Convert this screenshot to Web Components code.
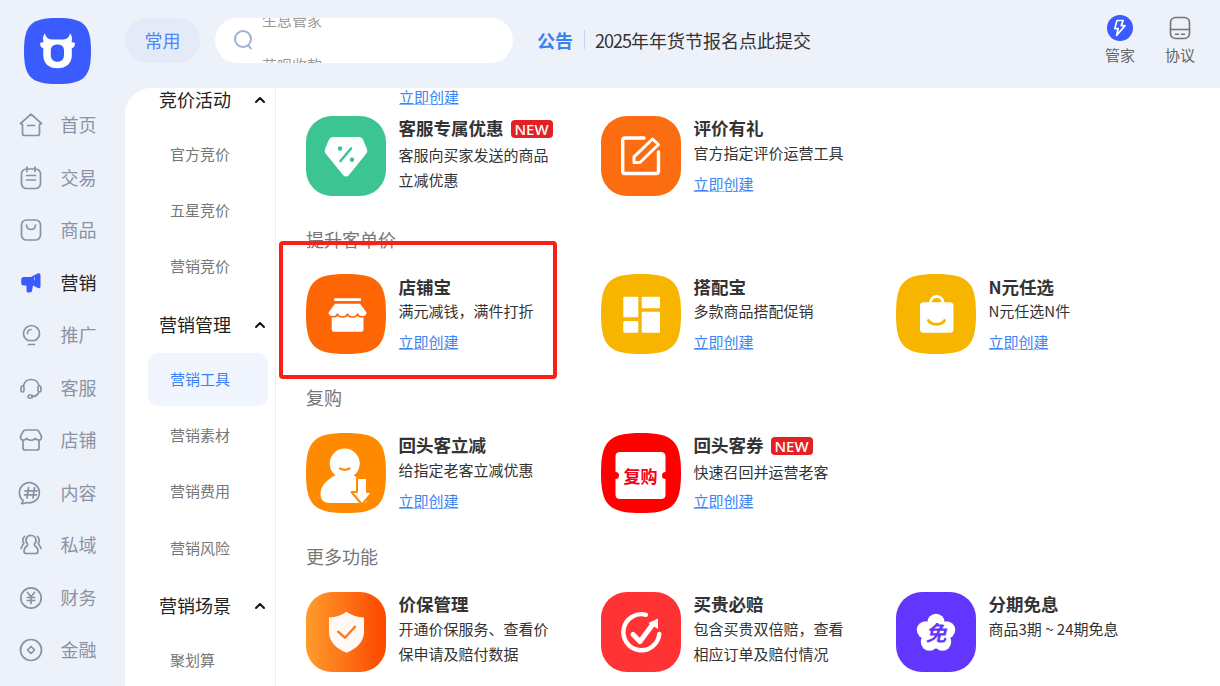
<!DOCTYPE html>
<html lang="zh-CN">
<head>
<meta charset="utf-8">
<title>营销工具</title>
<style>
html,body{margin:0;padding:0;height:686px;overflow:hidden;background:#edf1f9;}
body{font-family:"Noto Sans CJK SC","Liberation Sans",sans-serif;color:#333;}
svg{display:block;}
</style>
</head>
<body>
<app-page>
  <top-bar slot="top">
    <brand-logo></brand-logo>
    <pill-tab>常用</pill-tab>
    <search-ticker>
      <span>生息管家</span>
      <span>花呗收款</span>
    </search-ticker>
    <notice-line label="公告"><span style="letter-spacing:-1px">2025</span>年年货节报名点此提交</notice-line>
    <top-action slot="actions" label="管家">
      <svg width="26" height="26" viewBox="0 0 26 26"><circle cx="13" cy="13" r="13" fill="#3a5cff"/><path d="M14.5 5.5H10L7.8 13.6H11.2L9.6 20.5L18 10.6H14.2L16.2 5.5Z" fill="none" stroke="#fff" stroke-width="1.7" stroke-linejoin="round"/></svg>
    </top-action>
    <top-action slot="actions" label="协议">
      <svg width="26" height="26" viewBox="0 0 26 26" fill="none" stroke="#757575" stroke-width="1.6" stroke-linecap="round"><rect x="3.5" y="2.5" width="19" height="21" rx="5"/><path d="M3.5 14.5H22.5M8.5 19.3H11.5M14.5 19.3H17.5"/></svg>
    </top-action>
  </top-bar>

  <rail-nav slot="rail">
    <rail-item label="首页"><svg width="26" height="26" viewBox="0 0 26 26"><path d="M2.5 11.5L13 2.2L23.5 11.5L21.5 12.6V21.5Q21.5 23.5 19.5 23.5H6.500Q4.500 23.500 4.500 21.500V12.600ZM9.500 13.500H16.500"/></svg></rail-item>
    <rail-item label="交易"><svg width="26" height="26" viewBox="0 0 26 26"><rect x="3.500" y="4" width="19" height="19.500" rx="5"/><path d="M9 2V6.500M17 2V6.500M8.500 10.500H17.500M8.500 15H17.500"/></svg></rail-item>
    <rail-item label="商品"><svg width="26" height="26" viewBox="0 0 26 26"><rect x="3.500" y="3" width="19" height="20" rx="5"/><path d="M8.500 8C9 14 17 14 17.500 8"/></svg></rail-item>
    <rail-item label="营销" active><svg width="26" height="26" viewBox="0 0 26 26"><path style="fill:#3a5cff;stroke:none" d="M5.500 7H13L19.500 3.500Q22.500 2.500 22.500 5V16.500Q22.500 19 20 18L15 15.500L14 21Q13.500 22.500 11.500 22.500H10Q8.500 22.500 8.500 21V15.500H5.500Q3.200 15.500 3.200 13V9.500Q3.200 7 5.500 7Z"/><path style="stroke:#9fb0ff;stroke-width:1" d="M16.500 7.500V10"/></svg></rail-item>
    <rail-item label="推广"><svg width="26" height="26" viewBox="0 0 26 26"><path d="M10 18.500C7.500 17 5.500 14.500 5.500 11.500A8 8 0 0 1 21.500 11.500C21.500 14.500 19.500 17 17 18.500ZM10.500 22.500H16.500M9.500 11.500A4 4 0 0 1 13 7.500"/></svg></rail-item>
    <rail-item label="客服"><svg width="26" height="26" viewBox="0 0 26 26"><path d="M5.500 10.500A8 8 0 0 1 21 10.500M20.500 18C19 21 17 21.500 14 21.500"/><rect x="3" y="11" width="3" height="6" rx="1.500"/><rect x="20" y="11" width="3" height="6" rx="1.500"/><rect x="10" y="20" width="4.500" height="3" rx="1.500"/></svg></rail-item>
    <rail-item label="店铺"><svg width="26" height="26" viewBox="0 0 26 26"><path d="M7.500 3H18.500Q20 3 20.700 4.200L23.500 9.500Q23.500 13.500 20.500 13Q18.500 13 17.500 11.500Q13 15 8.500 11.500Q7.500 13 5.500 13Q2.500 13.500 2.500 9.500L5.300 4.200Q6 3 7.500 3ZM5 13V21Q5 23 7 23H19Q21 23 21 21V13"/></svg></rail-item>
    <rail-item label="内容"><svg width="26" height="26" viewBox="0 0 26 26"><path d="M5 20.500A10 10 0 1 1 9 22.500Q6.500 23.800 3.500 23.500Q5 22.500 5 20.500ZM10.500 7.500L9 18M16.500 7.500L15 18M7 10.800H19M6.500 14.800H18.500"/></svg></rail-item>
    <rail-item label="私域"><svg width="26" height="26" viewBox="0 0 26 26"><path d="M13.200 3.500A4.800 4.800 0 0 1 16.500 11.800Q16 13 17 14C19 15 20 17 20 19.500Q20 21.500 17.500 21.500H8.500Q6 21.500 6 19.500C6 17 7 15 9 14Q10 13 9.500 11.800A4.800 4.800 0 0 1 13.200 3.500ZM6.500 4.500Q3.500 7.500 5.800 11.500Q4 13.500 3 16.500M19.500 4.500Q22.500 7.500 20.200 11.500Q22 13.500 23 16.500"/></svg></rail-item>
    <rail-item label="财务"><svg width="26" height="26" viewBox="0 0 26 26"><circle cx="13" cy="13" r="10.200"/><path d="M9.500 7.500L13 11.800L16.500 7.500M13 11.800V18.500M9.300 12.500H16.700M9.300 15.500H16.700"/></svg></rail-item>
    <rail-item label="金融"><svg width="26" height="26" viewBox="0 0 26 26"><circle cx="13" cy="13" r="10.500"/><path d="M13 9.500L16.500 13L13 16.500L9.500 13Z"/></svg></rail-item>
  </rail-nav>

  <sub-nav slot="sub">
    <sub-head>竞价活动</sub-head>
    <sub-item>官方竞价</sub-item>
    <sub-item>五星竞价</sub-item>
    <sub-item>营销竞价</sub-item>
    <sub-head>营销管理</sub-head>
    <sub-item active>营销工具</sub-item>
    <sub-item>营销素材</sub-item>
    <sub-item>营销费用</sub-item>
    <sub-item>营销风险</sub-item>
    <sub-head>营销场景</sub-head>
    <sub-item>聚划算</sub-item>
  </sub-nav>

  <tool-board slot="main">
    <tool-peek><tool-link>立即创建</tool-link></tool-peek>

    <tool-row>
      <tool-card badge>
        <svg slot="icon" width="80" height="80" viewBox="0 0 80 80"><rect width="80" height="80" rx="26" fill="#3cc492"/><path d="M27 21H53Q56 21 57 23.500L61 33Q62 36 60 38L43 59Q40 62 37 59L20 38Q18 36 19 33L23 23.500Q24 21 27 21Z" fill="#fff"/><path d="M45 32.500L34.500 45" stroke="#3cc492" stroke-width="2.600" stroke-linecap="round"/><circle cx="34" cy="32.500" r="2.300" fill="#3cc492"/><circle cx="46" cy="43.800" r="2.300" fill="#3cc492"/></svg>
        <span slot="name">客服专属优惠</span><new-tag slot="tag">NEW</new-tag>
        <span slot="desc">客服向买家发送的商品<br>立减优惠</span>
      </tool-card>
      <tool-card>
        <svg slot="icon" width="80" height="80" viewBox="0 0 80 80"><rect width="80" height="80" rx="26" fill="#fb6d10"/><path d="M43 22H24Q21.700 22 21.700 24.300V55Q21.700 57.500 24 57.500H55Q57.500 57.500 57.500 55V36" fill="none" stroke="#fff" stroke-width="3.400" stroke-linecap="round"/><path d="M33 46.500V40.800L51.500 23L57.500 28.500L39 46.500Z" fill="none" stroke="#fff" stroke-width="3" stroke-linejoin="round"/></svg>
        <span slot="name">评价有礼</span>
        <span slot="desc">官方指定评价运营工具</span>
        <tool-link slot="link">立即创建</tool-link>
      </tool-card>
    </tool-row>

    <tool-heading>提升客单价</tool-heading>
    <tool-row>
      <tool-card highlight>
        <svg slot="icon" width="80" height="80" viewBox="0 0 80 80"><path d="M40 0C72 0 80 8 80 40C80 72 72 80 40 80C8 80 0 72 0 40C0 8 8 0 40 0Z" fill="#fd6505"/><rect x="28" y="24.300" width="27" height="2.700" rx=".8" fill="#fff"/><rect x="25.700" y="38" width="31.800" height="19.700" rx="2" fill="#fff"/><path d="M28.500 29H54.500L61.300 38.300C61.300 44 52.500 44 51.500 40C50.500 44 42.500 44 41.500 40C40.500 44 32.500 44 31.500 40C30.500 44 21.800 44 21.800 38.300Z" fill="#fff" stroke="#fd6505" stroke-width="1.500" stroke-linejoin="round"/></svg>
        <span slot="name">店铺宝</span>
        <span slot="desc">满元减钱，满件打折</span>
        <tool-link slot="link">立即创建</tool-link>
      </tool-card>
      <tool-card>
        <svg slot="icon" width="80" height="80" viewBox="0 0 80 80"><path d="M40 0C72 0 80 8 80 40C80 72 72 80 40 80C8 80 0 72 0 40C0 8 8 0 40 0Z" fill="#f7b500"/><g fill="#fff"><rect x="22.300" y="22.700" width="15" height="20.600" rx="1"/><rect x="40.700" y="22.700" width="18.300" height="11.600" rx="1"/><rect x="40.700" y="37.700" width="18.300" height="21" rx="1"/><rect x="22.300" y="47" width="15" height="11.700" rx="1"/></g></svg>
        <span slot="name">搭配宝</span>
        <span slot="desc">多款商品搭配促销</span>
        <tool-link slot="link">立即创建</tool-link>
      </tool-card>
      <tool-card>
        <svg slot="icon" width="80" height="80" viewBox="0 0 80 80"><path d="M40 0C72 0 80 8 80 40C80 72 72 80 40 80C8 80 0 72 0 40C0 8 8 0 40 0Z" fill="#f7b500"/><path d="M34.500 30V28A6.300 6.300 0 0 1 47 28V30" fill="none" stroke="#fff" stroke-width="2.800"/><rect x="24" y="28.300" width="33.400" height="30.400" rx="3.500" fill="#fff"/><path d="M32.500 46.500C35.500 51.500 45.500 51.500 48.500 46.500" fill="none" stroke="#f7b500" stroke-width="2.800" stroke-linecap="round"/></svg>
        <span slot="name">N元任选</span>
        <span slot="desc">N元任选N件</span>
        <tool-link slot="link">立即创建</tool-link>
      </tool-card>
    </tool-row>

    <tool-heading>复购</tool-heading>
    <tool-row>
      <tool-card>
        <svg slot="icon" width="80" height="80" viewBox="0 0 80 80"><path d="M40 0C72 0 80 8 80 40C80 72 72 80 40 80C8 80 0 72 0 40C0 8 8 0 40 0Z" fill="#ff8a00"/><circle cx="38.700" cy="30.500" r="15" fill="#fff"/><path d="M30 42C22 46 14.500 52 14.500 61C14.500 67 18 70 24 70H58C62 70 62 62 60 56C58 50 54 46 47 42Z" fill="#fff"/><path d="M34 35.500Q38.700 38 43.500 35.500" fill="none" stroke="#ff8a00" stroke-width="2.200" stroke-linecap="round"/><path d="M51 45H61V59H66.500L56 71.500L45.500 59H51Z" fill="#fff" stroke="#ff8a00" stroke-width="2" stroke-linejoin="round"/></svg>
        <span slot="name">回头客立减</span>
        <span slot="desc">给指定老客立减优惠</span>
        <tool-link slot="link">立即创建</tool-link>
      </tool-card>
      <tool-card badge>
        <svg slot="icon" width="80" height="80" viewBox="0 0 80 80"><path d="M40 0C72 0 80 8 80 40C80 72 72 80 40 80C8 80 0 72 0 40C0 8 8 0 40 0Z" fill="#ff0000"/><path d="M19 19H60Q64.500 19 64.500 23.500V39A3.500 3.500 0 0 0 64.500 46V61.500Q64.500 66 60 66H19Q14.500 66 14.500 61.500V46A3.500 3.500 0 0 0 14.500 39V23.500Q14.500 19 19 19Z" fill="#fff"/><text x="39.500" y="49.500" text-anchor="middle" font-size="17" font-weight="700" fill="#f40016" font-family="Noto Sans CJK SC, sans-serif">复购</text></svg>
        <span slot="name">回头客券</span><new-tag slot="tag">NEW</new-tag>
        <span slot="desc">快速召回并运营老客</span>
        <tool-link slot="link">立即创建</tool-link>
      </tool-card>
    </tool-row>

    <tool-heading>更多功能</tool-heading>
    <tool-row>
      <tool-card>
        <svg slot="icon" width="80" height="80" viewBox="0 0 80 80"><defs><linearGradient id="g1" x1="0" x2="1" y1="0" y2="0"><stop offset="0" stop-color="#ff9c2b"/><stop offset="1" stop-color="#fd4700"/></linearGradient></defs><rect width="80" height="80" rx="26" fill="url(#g1)"/><path d="M40.500 19.700C45 23 51 25 58 25.500V40C58 50 50 57 40.500 60.700C31 57 23 50 23 40V25.500C30 25 36 23 40.500 19.700Z" fill="#fff" fill-opacity=".96"/><path d="M32 39.700L39 45.700L49 34.700" fill="none" stroke="#f9782a" stroke-width="2.400" stroke-linecap="round" stroke-linejoin="round"/></svg>
        <span slot="name">价保管理</span>
        <span slot="desc">开通价保服务、查看价<br>保申请及赔付数据</span>
      </tool-card>
      <tool-card>
        <svg slot="icon" width="80" height="80" viewBox="0 0 80 80"><rect width="80" height="80" rx="26" fill="#ff3333"/><path d="M45 22.800A18 18 0 1 0 58.300 42" fill="none" stroke="#fff" stroke-width="4.400" stroke-linecap="round"/><path d="M32 42.500L39 49.500L52 32" fill="none" stroke="#fff" stroke-width="5" stroke-linecap="round" stroke-linejoin="round"/><path d="M47.500 31L57 26.500L57 37Z" fill="#fff"/></svg>
        <span slot="name">买贵必赔</span>
        <span slot="desc">包含买贵双倍赔，查看<br>相应订单及赔付情况</span>
      </tool-card>
      <tool-card>
        <svg slot="icon" width="80" height="80" viewBox="0 0 80 80"><rect width="80" height="80" rx="26" fill="#6236ff"/><g fill="#fff"><circle cx="40" cy="30.500" r="8.700"/><circle cx="29.500" cy="38" r="8.700"/><circle cx="50.500" cy="38" r="8.700"/><circle cx="33.500" cy="50" r="8.700"/><circle cx="46.500" cy="50" r="8.700"/><circle cx="40" cy="41" r="9"/></g><text x="40" y="49" text-anchor="middle" font-size="21" font-weight="700" font-style="italic" fill="#6236ff" font-family="Noto Sans CJK SC, sans-serif">免</text></svg>
        <span slot="name">分期免息</span>
        <span slot="desc">商品3期 ~ 24期免息</span>
      </tool-card>
    </tool-row>
  </tool-board>
</app-page>

<script>
function def(name, css, html, extra){
  const tpl=document.createElement('template');
  tpl.innerHTML='<style>'+css+'</style>'+html;
  customElements.define(name,class extends HTMLElement{
    constructor(){super();this.attachShadow({mode:'open'}).appendChild(tpl.content.cloneNode(true));}
    connectedCallback(){if(extra)extra(this);}
  });
}
def('app-page',`
  :host{display:grid;grid-template-columns:125px 151px 1fr;grid-template-rows:88px 598px;width:1220px;height:686px;overflow:hidden;}
  ::slotted([slot=top]){grid-column:1/4;}
  .sub{grid-column:2;grid-row:2;background:#fff;border-top-left-radius:26px;overflow:hidden;}
  .main{grid-column:3;grid-row:2;background:#fff;overflow:hidden;}
`,`<slot name="top"></slot><slot name="rail"></slot><div class="sub"><slot name="sub"></slot></div><div class="main"><slot name="main"></slot></div>`);

def('top-bar',`
  :host{display:flex;align-items:flex-start;padding-top:18px;box-sizing:border-box;height:88px;padding-left:24px;}
  .a{margin-left:auto;display:flex;gap:30px;padding-right:25px;margin-top:-3px;}
`,`<slot></slot><div class="a"><slot name="actions"></slot></div>`);

def('brand-logo',`
  :host{display:block;width:67px;height:66px;margin-right:34px;flex:none;}
`,`<svg width="67" height="66" viewBox="0 0 67 66" style="display:block"><path d="M33.500 0C60 0 67 7 67 33C67 59 60 66 33.500 66C7 66 0 59 0 33C0 7 7 0 33.500 0Z" fill="#3a5cff"/><path fill-rule="evenodd" fill="#fff" d="M21 15.300C21.500 19 24 21.500 28 21.500H39C43 21.500 45.500 19 46 15.300C48 17.500 48.500 21 47.500 24L51 25C51 28 49.500 30 47.800 30V37.500C47.800 45.500 42 50.300 33.500 50.300C25 50.300 19.300 45.500 19.300 37.500V30C17.500 30 16 28 16 25L19.500 24C18.500 21 19 17.500 21 15.300ZM33.500 26.500C29.500 26.500 26.800 28.500 26.800 32.500V37C26.800 41 29.500 43.800 33.500 43.800C37.500 43.800 40 41 40 37V32.500C40 28.500 37.500 26.500 33.500 26.500Z"/></svg>`);

def('pill-tab',`
  :host{display:flex;align-items:center;justify-content:center;box-sizing:border-box;padding-bottom:2px;width:75px;height:45px;border-radius:23px;background:#e4eaf7;color:#4e86f5;font-size:18px;flex:none;margin-right:15px;}
`,`<slot></slot>`);

def('search-ticker',`
  :host{display:flex;width:298px;height:45px;border-radius:23px;background:#fff;overflow:hidden;flex:none;box-sizing:border-box;padding-left:18px;}
  svg{display:block;flex:none;margin-top:11px;margin-right:8px;}
  .list{display:flex;flex-direction:column;margin-top:-21.5px;}
  ::slotted(span){display:block;font-size:15px;line-height:45px;color:#999;}
`,`<svg width="21" height="22" viewBox="0 0 21 22" fill="none" stroke="#9fb0d6" stroke-width="2" stroke-linecap="round"><circle cx="10" cy="10" r="8"/><path d="M15.500 16.500L17.800 19.500"/></svg><div class="list"><slot></slot></div>`);

def('notice-line',`
  :host{display:flex;align-items:center;box-sizing:border-box;height:45px;padding-bottom:2px;margin-left:24px;font-size:18px;color:#333;}
  b{color:#3d7ff5;font-weight:700;}
  i{display:block;width:1px;height:19px;background:#c6d3ec;margin:0 10px 0 11px;}
  div{white-space:nowrap;}
`,`<b></b><i></i><div><slot></slot></div>`,el=>{el.shadowRoot.querySelector('b').textContent=el.getAttribute('label');});

def('top-action',`
  :host{display:flex;flex-direction:column;align-items:center;width:30px;font-size:15px;color:#666;}
  span{line-height:22px;margin-top:3px;white-space:nowrap;}
`,`<slot></slot><span></span>`,el=>{el.shadowRoot.querySelector('span').textContent=el.getAttribute('label');});

def('rail-nav',`
  :host{display:flex;flex-direction:column;padding-top:11px;grid-column:1;grid-row:2;}
`,`<slot></slot>`);

def('rail-item',`
  :host{display:flex;align-items:center;height:52.5px;padding-left:17.5px;font-size:18px;color:#8a93a6;flex:none;}
  :host([active]){color:#222;}
  span{margin-left:17px;margin-bottom:2px;}
  ::slotted(svg){fill:none;stroke:#8891a5;stroke-width:1.7;stroke-linecap:round;stroke-linejoin:round;display:block;flex:none;}
`,`<slot></slot><span></span>`,el=>{el.shadowRoot.querySelector('span').textContent=el.getAttribute('label');});

def('sub-nav',`
  :host{display:block;box-sizing:border-box;border-right:1px solid #eceef2;margin-top:-14px;height:calc(100% + 14px);}
`,`<slot></slot>`);

def('sub-head',`
  :host{display:flex;align-items:center;height:52px;margin-top:4px;padding-left:34px;padding-right:9px;font-size:18px;color:#222;}
  :host(:first-child){margin-top:0;}
  span{margin-bottom:2px;}
  svg{margin-left:auto;display:block;}
`,`<span><slot></slot></span><svg width="12" height="8" viewBox="0 0 12 8" fill="none" stroke="#111" stroke-width="2" stroke-linecap="round" stroke-linejoin="round"><path d="M2 6L6 2L10 6"/></svg>`);

def('sub-item',`
  :host{display:flex;align-items:center;height:56.33px;margin-left:23px;width:120px;font-size:15px;color:#777;}
  div{display:flex;align-items:center;width:100%;height:53px;padding-left:22px;padding-bottom:2px;box-sizing:border-box;border-radius:10px;}
  :host([active]){color:#3d7ff5;}
  :host([active]) div{background:#f1f5fd;}
`,`<div><slot></slot></div>`);

def('tool-board',`
  :host{display:block;padding-left:30px;margin-top:-3px;}
`,`<slot></slot>`);

def('tool-peek',`
  :host{display:block;padding-left:93px;height:30.67px;}
`,`<slot></slot>`);

def('tool-row',`
  :host{display:grid;grid-template-columns:295px 295px 295px;height:80px;}
`,`<slot></slot>`);

def('tool-heading',`
  :host{display:block;height:78.67px;box-sizing:border-box;padding-top:31px;font-size:18px;line-height:24px;color:#777;}
`,`<slot></slot>`);

def('tool-link',`
  :host{display:block;font-size:15px;line-height:24px;color:#3d85f5;text-decoration:underline;text-decoration-color:rgba(61,133,245,.5);text-underline-offset:1px;text-decoration-thickness:1px;}
`,`<slot></slot>`);

def('new-tag',`
  :host{display:inline-flex;align-items:center;justify-content:center;margin-top:2px;width:42px;height:18px;border-radius:4px;background:#e32024;color:#fff;font:500 15px/18px "Noto Sans","Liberation Sans",sans-serif;margin-left:7px;}
`,`<slot></slot>`);

def('tool-card',`
  :host{display:flex;position:relative;height:80px;gap:12.5px;}
  .t{display:flex;flex-direction:column;height:80px;}
  .n{display:flex;align-items:center;box-sizing:border-box;height:26px;padding-bottom:2px;margin-bottom:-2px;font-size:17.5px;font-weight:700;color:#333;white-space:nowrap;}
  :host([badge]) .n{margin-bottom:0;}
  .d{font-size:15px;line-height:25px;color:#333;white-space:nowrap;}
  .l{margin-top:auto;}
  :host([highlight])::after{content:"";position:absolute;left:-27px;top:-33px;width:278px;height:138px;box-sizing:border-box;border:4px solid #fb1f17;border-radius:4px;pointer-events:none;}
`,`<slot name="icon"></slot><div class="t"><div class="n"><slot name="name"></slot><slot name="tag"></slot></div><div class="d"><slot name="desc"></slot></div><div class="l"><slot name="link"></slot></div></div>`);
</script>
</body>
</html>
